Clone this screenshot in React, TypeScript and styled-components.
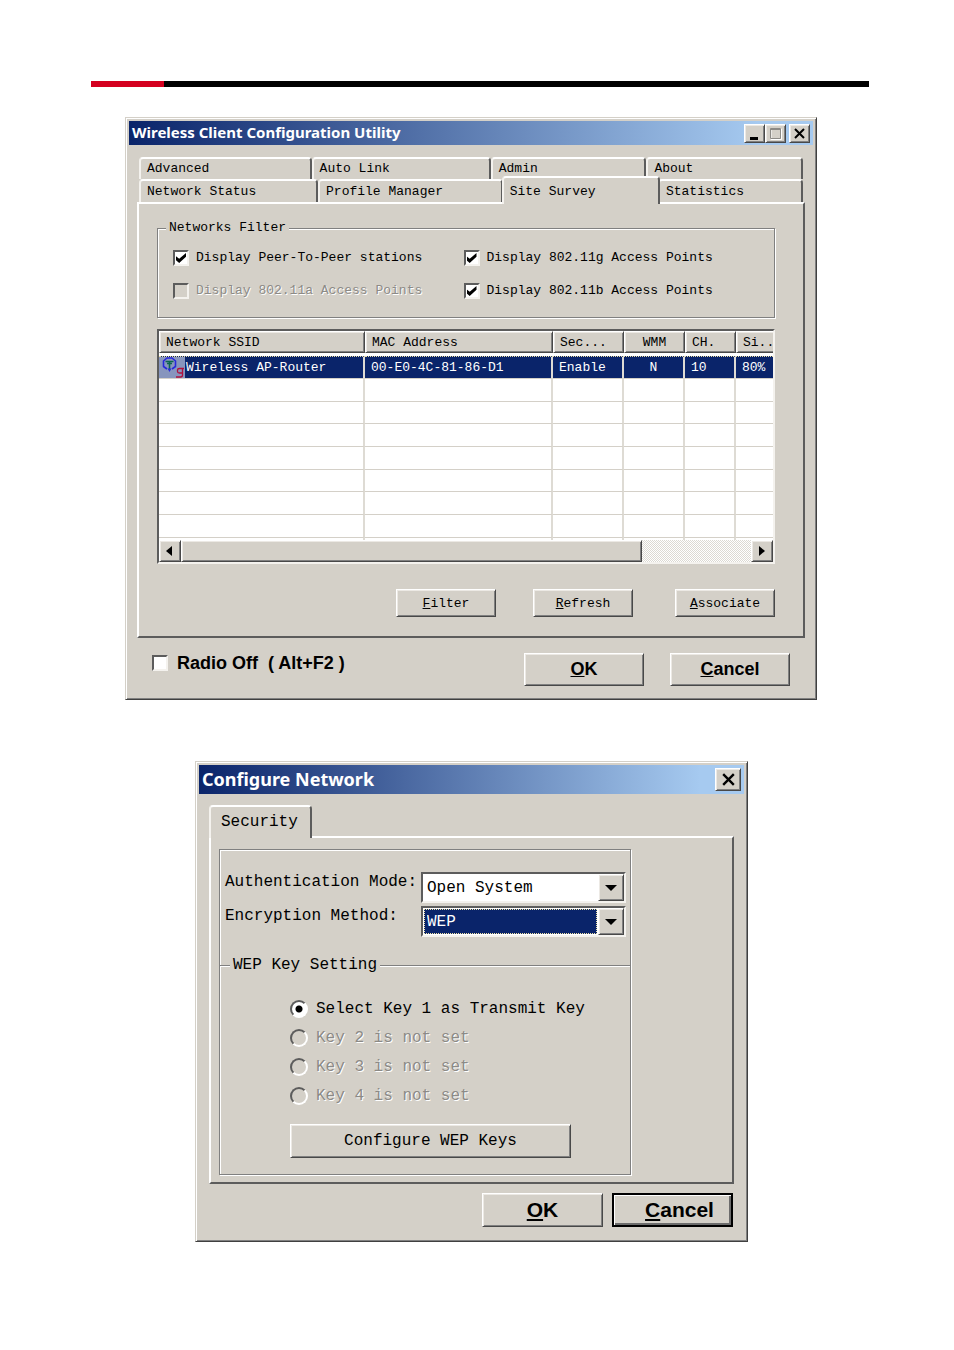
import React from "react";
import styled, { createGlobalStyle, css } from "styled-components";

const face = "#d4d0c8";
const navy = "#0a246a";
const mono = '"Liberation Mono", "Noto Sans CJK SC", monospace';
const sans = '"Liberation Sans", Arial, sans-serif';

const GlobalStyle = createGlobalStyle`
  * { box-sizing: border-box; }
  body { margin: 0; background: #fff; color: #000; font-family: ${mono}; font-size: 13px; }
  button, input, select { font: inherit; color: inherit; margin: 0; padding: 0; }
`;

const raised = css`
  background: ${face};
  border: 1px solid;
  border-color: #fff #484848 #484848 #fff;
  box-shadow: inset 1px 1px 0 #ece9e4, inset -1px -1px 0 #808080;
`;

const sunken = css`
  border: 2px solid;
  border-color: #5c5c5c #f4f2ee #f4f2ee #5c5c5c;
`;

const Page = styled.main`
  padding: 81px 85px 108px 91px;
`;

const Rule = styled.div`
  height: 6px;
  background: linear-gradient(to right, #d4001f 73px, #000 73px);
`;

const Window = styled.section<{ $large?: boolean }>`
  background: ${face};
  border: 1px solid;
  border-color: ${face} #404040 #404040 ${face};
  box-shadow: inset 1px 1px 0 #fff, inset -1px -1px 0 #808080;
  padding: 3px;
  margin: ${(p) => (p.$large ? "61px 121px 0 104px" : "30px 52px 0 34px")};
  font-size: ${(p) => (p.$large ? 16 : 13)}px;
`;

const TitleBar = styled.header<{ $large?: boolean }>`
  display: flex;
  align-items: center;
  height: ${(p) => (p.$large ? 29 : 24)}px;
  padding: 0 3px;
  background: linear-gradient(to right, ${navy}, #a6caf0 92%);
`;

const Title = styled.h1<{ $large?: boolean }>`
  flex: 1;
  margin: 0;
  padding-bottom: 2px;
  color: #fff;
  white-space: nowrap;
  font: 700 ${(p) => (p.$large ? 18 : 15)}px "Noto Sans", ${sans};
`;

const CaptionButton = styled.button<{ $large?: boolean; $apart?: boolean }>`
  ${raised}
  display: flex;
  align-items: center;
  justify-content: center;
  width: ${(p) => (p.$large ? 26 : 21)}px;
  height: ${(p) => (p.$large ? 23 : 19)}px;
  margin-left: ${(p) => (p.$apart ? 3 : 0)}px;
`;

const TabRow = styled.div`
  display: flex;
  padding: 0 2px;
`;

const Tab = styled.button<{ $grow: number; $active?: boolean }>`
  position: relative;
  flex: ${(p) => p.$grow} 1 0;
  height: 22px;
  text-align: left;
  padding-left: 6px;
  line-height: 18px;
  background: ${face};
  border: 2px solid;
  border-color: #fff #5c5c5c transparent #f4f2ee;
  border-bottom: 0;
  border-radius: 4px 4px 0 0;
  ${TabRow} + ${TabRow} & {
    height: 23px;
  }
  ${(p) =>
    p.$active &&
    css`
      z-index: 1;
      ${TabRow} + ${TabRow} & {
        height: 28px;
        margin: -3px -2px -2px -1px;
        padding: 2px 0 0 6px;
      }
    `}
`;

const TabPanel = styled.div`
  border: 2px solid;
  border-color: #fff #5c5c5c #5c5c5c #fff;
`;

const SurveyTabs = styled.div`
  margin: 12px 8px 0 8px;
`;

const SurveyPanel = styled(TabPanel)`
  padding: 16px 28px 19px 18px;
`;

const GroupBox = styled.fieldset`
  min-width: 0;
  margin: 0;
  border: 1px solid #808080;
  box-shadow: 1px 1px 0 #fff, inset 1px 1px 0 #fff;
`;

const Legend = styled.legend`
  background: ${face};
  padding: 0 3px;
  line-height: 16px;
`;

const FilterGroup = styled(GroupBox)`
  display: grid;
  grid-template-columns: 291fr 302fr;
  row-gap: 17px;
  padding: 14px 9px 18px 15px;
  ${Legend} {
    margin-left: -7px;
  }
`;

const Choice = styled.label<{ $gap?: number }>`
  display: flex;
  align-items: center;
  gap: ${(p) => p.$gap ?? 7}px;
  line-height: 16px;
  white-space: pre;
  &:has(input:disabled) {
    color: #8c8a86;
    text-shadow: 1px 1px 0 #fff;
  }
`;

const CheckBox = styled.input.attrs({ type: "checkbox" })`
  ${sunken}
  appearance: none;
  flex: none;
  width: 16px;
  height: 16px;
  background: #fff;
  &:disabled {
    background: ${face};
  }
  &:checked::after {
    content: "";
    display: block;
    width: 10px;
    height: 10px;
    margin: 1px;
    background: #000;
    clip-path: polygon(0 32%, 32% 58%, 100% 0, 100% 38%, 32% 100%, 0 72%);
  }
`;

const Radio = styled.input.attrs({ type: "radio" })`
  appearance: none;
  flex: none;
  width: 18px;
  height: 18px;
  border: 2px solid;
  border-color: #5c5c5c #fff #fff #5c5c5c;
  border-radius: 50%;
  background: #fff;
  &:disabled {
    background: ${face};
  }
  &:checked {
    background: radial-gradient(circle, #000 3px, #fff 4px);
  }
`;

const ListView = styled.div`
  ${sunken}
  margin-top: 11px;
  background: #fff;
`;

const ListViewport = styled.div`
  height: 209px;
  overflow: hidden;
`;

const Table = styled.table`
  width: 100%;
  table-layout: fixed;
  border-collapse: separate;
  border-spacing: 0;
`;

const HeadCell = styled.th<{ $center?: boolean }>`
  ${raised}
  height: 22px;
  padding: 0 0 0 ${(p) => (p.$center ? 0 : 6)}px;
  font-weight: 400;
  white-space: nowrap;
  text-align: ${(p) => (p.$center ? "center" : "left")};
  &:last-child {
    border-right: 0;
    box-shadow: inset 1px 1px 0 #ece9e4, inset 0 -1px 0 #808080;
  }
`;

const Cell = styled.td<{ $center?: boolean }>`
  height: 23px;
  padding: 0 0 0 ${(p) => (p.$center ? 0 : 6)}px;
  white-space: nowrap;
  text-align: ${(p) => (p.$center ? "center" : "left")};
  border-right: 2px solid #dedbd4;
  border-bottom: 1px solid #d4d0c8;
  &:last-child {
    border-right: 0;
  }
`;

const Row = styled.tr<{ $selected?: boolean }>`
  &:nth-child(3n) ${Cell} {
    height: 22px;
  }
  ${(p) =>
    p.$selected &&
    css`
      color: #fff;
      ${Cell} {
        background: ${navy};
        border-top: 1px dotted #e8dca0;
      }
      ${Cell}:first-child {
        padding: 0;
      }
    `}
`;

const Spacer = styled.tbody`
  td {
    height: 3px;
    padding: 0;
  }
`;

const NameCell = styled.span`
  display: flex;
  align-items: center;
  gap: 1px;
`;

const ScrollBar = styled.div`
  display: flex;
  height: 22px;
`;

const ScrollButton = styled.button`
  ${raised}
  display: flex;
  align-items: center;
  justify-content: center;
  width: 22px;
`;

const Thumb = styled.div`
  ${raised}
  flex: 461 1 0;
`;

const Track = styled.div`
  flex: 109 1 0;
  background: repeating-conic-gradient(#fff 0 25%, #dcd9d2 0 50%) 0 0 / 2px 2px;
`;

const ActionRow = styled.div`
  display: flex;
  justify-content: flex-end;
  margin-top: 25px;
`;

const Button = styled.button`
  ${raised}
  width: 100px;
  height: 28px;
  ${ActionRow} & + & {
    margin-left: 37px;
  }
  ${ActionRow} & + & + & {
    margin-left: 42px;
  }
`;

const BigButton = styled.button<{ $large?: boolean; $default?: boolean }>`
  ${raised}
  width: ${(p) => (p.$large ? 121 : 120)}px;
  height: ${(p) => (p.$large ? 34 : 33)}px;
  font: 700 ${(p) => (p.$large ? 21 : 18)}px ${sans};
  ${(p) =>
    p.$default &&
    css`
      border: 2px solid #000;
      padding-left: 14px;
      box-shadow: inset 1px 1px 0 #fff, inset -2px -2px 0 #6c6c6c;
    `}
`;

const Footer = styled.footer`
  display: flex;
  align-items: center;
  gap: 26px;
  padding: 15px 23px 10px;
  ${Choice} {
    flex: 1;
    align-self: flex-start;
    font: 700 18px/20px ${sans};
  }
`;

const SecurityTabs = styled.div`
  margin: 11px 10px 0;
`;

const SecurityTab = styled(Tab)`
  flex: none;
  width: 103px;
  height: 33px;
  margin: 0 0 -2px -2px;
  padding: 0 0 2px 10px;
`;

const SecurityPanel = styled(TabPanel)`
  padding: 11px 101px 7px 8px;
`;

const SecurityFrame = styled.div`
  border: 1px solid #808080;
  box-shadow: 1px 1px 0 #fff, inset 1px 1px 0 #fff;
  padding: 22px 0 0;
`;

const Fields = styled.div`
  display: grid;
  grid-template-columns: 196px 1fr;
  row-gap: 3px;
  padding: 0 4px 0 5px;
  label {
    line-height: 20px;
  }
`;

const Combo = styled.div`
  ${sunken}
  display: flex;
  height: 31px;
  background: #fff;
`;

const Select = styled.select<{ $focused?: boolean }>`
  appearance: none;
  flex: 1;
  min-width: 0;
  border: 0;
  border-radius: 0;
  padding-left: 4px;
  background: #fff;
  outline: 0;
  ${(p) =>
    p.$focused &&
    css`
      margin: 1px;
      padding-left: 3px;
      color: #fff;
      background: ${navy};
      outline: 1px dotted #f0e4a8;
      outline-offset: -1px;
    `}
`;

const DropArrow = styled.span`
  ${raised}
  display: flex;
  align-items: center;
  justify-content: center;
  width: 26px;
`;

const KeyGroup = styled.fieldset`
  min-width: 0;
  margin: 18px 0 0;
  border: 0;
  border-top: 1px solid #808080;
  box-shadow: inset 0 1px 0 #fff;
  padding: 24px 59px 16px 70px;
  display: grid;
  row-gap: 9px;
  ${Legend} {
    margin-left: -60px;
    line-height: 20px;
  }
  ${Choice} {
    line-height: 20px;
  }
`;

const WideButton = styled(Button)`
  width: 281px;
  height: 34px;
  margin-top: 9px;
`;

const DialogFooter = styled(Footer)`
  justify-content: flex-end;
  gap: 9px;
  padding: 9px 11px 11px;
`;

const CloseGlyph = ({ size }: { size: number }) => (
  <svg width={size} height={size} viewBox="0 0 11 11" aria-hidden>
    <path d="M1 1 L10 10 M10 1 L1 10" stroke="#000" strokeWidth="2" />
  </svg>
);

const Triangle = ({ d, w, h }: { d: string; w: number; h: number }) => (
  <svg width={w} height={h} aria-hidden>
    <path d={d} fill="#000" />
  </svg>
);

const AccessPointIcon = () => (
  <svg width="26" height="21" viewBox="0 0 26 21" aria-hidden>
    <rect width="26" height="21" fill="#8795bd" />
    <path
      d="M8 12 L4.5 9.5 V4 L8 1 H13 L16.5 4 V9.5 L13 12"
      fill="none"
      stroke="#2828dc"
      strokeWidth="1.6"
      strokeLinejoin="round"
    />
    <path d="M6.5 4.5 H14.5 M8 6.5 H13 M10.5 5 V13" stroke="#0c6650" strokeWidth="1.6" />
    <path d="M8.5 11.5 H12.5 L10.5 15 Z" fill="#2828dc" />
    <path
      d="M25 11.5 H20.5 Q18.5 11.5 18.5 13 V14.5 Q18.5 16 20.5 16 H23.5 M23.5 11.5 V18 Q23.5 20 21.5 20 H17"
      fill="none"
      stroke="#b0103c"
      strokeWidth="1.3"
    />
  </svg>
);

const columns = [
  { label: "Network SSID", width: 206 },
  { label: "MAC Address", width: 188 },
  { label: "Sec...", width: 71 },
  { label: "WMM", width: 61, center: true },
  { label: "CH.", width: 51 },
  { label: "Si.." },
];

const network = ["Wireless AP-Router", "00-E0-4C-81-86-D1", "Enable", "N", "10", "80%"];

const filters = [
  { label: "Display Peer-To-Peer stations", on: true },
  { label: "Display 802.11g Access Points", on: true },
  { label: "Display 802.11a Access Points", off: true },
  { label: "Display 802.11b Access Points", on: true },
];

const keys = ["Select Key 1 as Transmit Key", "Key 2 is not set", "Key 3 is not set", "Key 4 is not set"];

const ClientUtility = () => (
  <Window>
    <TitleBar>
      <Title>Wireless Client Configuration Utility</Title>
      <CaptionButton aria-label="Minimize">
        <svg width="15" height="13" aria-hidden>
          <path d="M3 10 H11 V13 H3 Z" fill="#000" />
        </svg>
      </CaptionButton>
      <CaptionButton aria-label="Maximize" disabled>
        <svg width="13" height="13" aria-hidden>
          <path d="M2 2 H12.5 V12.5 H2 Z" fill="none" stroke="#fff" />
          <path d="M1.5 1.5 H11.5 V11.5 H1.5 Z M1.5 2.5 H11.5" fill="none" stroke="#8c8a86" />
        </svg>
      </CaptionButton>
      <CaptionButton aria-label="Close" $apart>
        <CloseGlyph size={11} />
      </CaptionButton>
    </TitleBar>
    <SurveyTabs>
      <TabRow role="tablist">
        <Tab role="tab" $grow={173}>Advanced</Tab>
        <Tab role="tab" $grow={180}>Auto Link</Tab>
        <Tab role="tab" $grow={155}>Admin</Tab>
        <Tab role="tab" $grow={156}>About</Tab>
      </TabRow>
      <TabRow role="tablist">
        <Tab role="tab" $grow={179}>Network Status</Tab>
        <Tab role="tab" $grow={185}>Profile Manager</Tab>
        <Tab role="tab" $grow={157} $active aria-selected>Site Survey</Tab>
        <Tab role="tab" $grow={143}>Statistics</Tab>
      </TabRow>
      <SurveyPanel role="tabpanel">
        <FilterGroup>
          <Legend>Networks Filter</Legend>
          {filters.map((f) => (
            <Choice key={f.label}>
              <CheckBox defaultChecked={f.on} disabled={f.off} />
              {f.label}
            </Choice>
          ))}
        </FilterGroup>
        <ListView>
          <ListViewport>
            <Table>
              <colgroup>
                {columns.map((c) => (
                  <col key={c.label} width={c.width} />
                ))}
              </colgroup>
              <thead>
                <tr>
                  {columns.map((c) => (
                    <HeadCell key={c.label} $center={c.center}>{c.label}</HeadCell>
                  ))}
                </tr>
              </thead>
              <Spacer>
                <tr>
                  <td colSpan={6} />
                </tr>
              </Spacer>
              <tbody>
                <Row $selected>
                  {network.map((text, i) => (
                    <Cell key={text} $center={columns[i].center}>
                      {i === 0 ? (
                        <NameCell>
                          <AccessPointIcon />
                          {text}
                        </NameCell>
                      ) : (
                        text
                      )}
                    </Cell>
                  ))}
                </Row>
                {Array.from({ length: 8 }, (_, r) => (
                  <Row key={r}>
                    {columns.map((c) => (
                      <Cell key={c.label} />
                    ))}
                  </Row>
                ))}
              </tbody>
            </Table>
          </ListViewport>
          <ScrollBar>
            <ScrollButton aria-label="Scroll left">
              <Triangle d="M6 0 V10 L0 5 Z" w={8} h={10} />
            </ScrollButton>
            <Thumb />
            <Track />
            <ScrollButton aria-label="Scroll right">
              <Triangle d="M1 0 V10 L7 5 Z" w={8} h={10} />
            </ScrollButton>
          </ScrollBar>
        </ListView>
        <ActionRow>
          <Button><u>F</u>ilter</Button>
          <Button><u>R</u>efresh</Button>
          <Button><u>A</u>ssociate</Button>
        </ActionRow>
      </SurveyPanel>
    </SurveyTabs>
    <Footer>
      <Choice $gap={9}>
        <CheckBox />
        {"Radio Off  ( Alt+F2 )"}
      </Choice>
      <BigButton><u>O</u>K</BigButton>
      <BigButton><u>C</u>ancel</BigButton>
    </Footer>
  </Window>
);

const ConfigureNetwork = () => (
  <Window $large>
    <TitleBar $large>
      <Title $large>Configure Network</Title>
      <CaptionButton aria-label="Close" $large>
        <CloseGlyph size={13} />
      </CaptionButton>
    </TitleBar>
    <SecurityTabs>
      <TabRow role="tablist">
        <SecurityTab role="tab" $grow={0} $active aria-selected>Security</SecurityTab>
      </TabRow>
      <SecurityPanel role="tabpanel">
        <SecurityFrame>
          <Fields>
            <label htmlFor="auth">Authentication Mode:</label>
            <Combo>
              <Select id="auth">
                <option>Open System</option>
              </Select>
              <DropArrow aria-hidden>
                <Triangle d="M0 0 H12 L6 6 Z" w={12} h={6} />
              </DropArrow>
            </Combo>
            <label htmlFor="encryption">Encryption Method:</label>
            <Combo>
              <Select id="encryption" $focused>
                <option>WEP</option>
              </Select>
              <DropArrow aria-hidden>
                <Triangle d="M0 0 H12 L6 6 Z" w={12} h={6} />
              </DropArrow>
            </Combo>
          </Fields>
          <KeyGroup>
            <Legend>WEP Key Setting</Legend>
            {keys.map((label, i) => (
              <Choice key={label} $gap={8}>
                <Radio name="key" defaultChecked={i === 0} disabled={i > 0} />
                {label}
              </Choice>
            ))}
            <WideButton>Configure WEP Keys</WideButton>
          </KeyGroup>
        </SecurityFrame>
      </SecurityPanel>
    </SecurityTabs>
    <DialogFooter>
      <BigButton $large><u>O</u>K</BigButton>
      <BigButton $large $default><u>C</u>ancel</BigButton>
    </DialogFooter>
  </Window>
);

export default function App() {
  return (
    <>
      <GlobalStyle />
      <Page>
        <Rule />
        <ClientUtility />
        <ConfigureNetwork />
      </Page>
    </>
  );
}
